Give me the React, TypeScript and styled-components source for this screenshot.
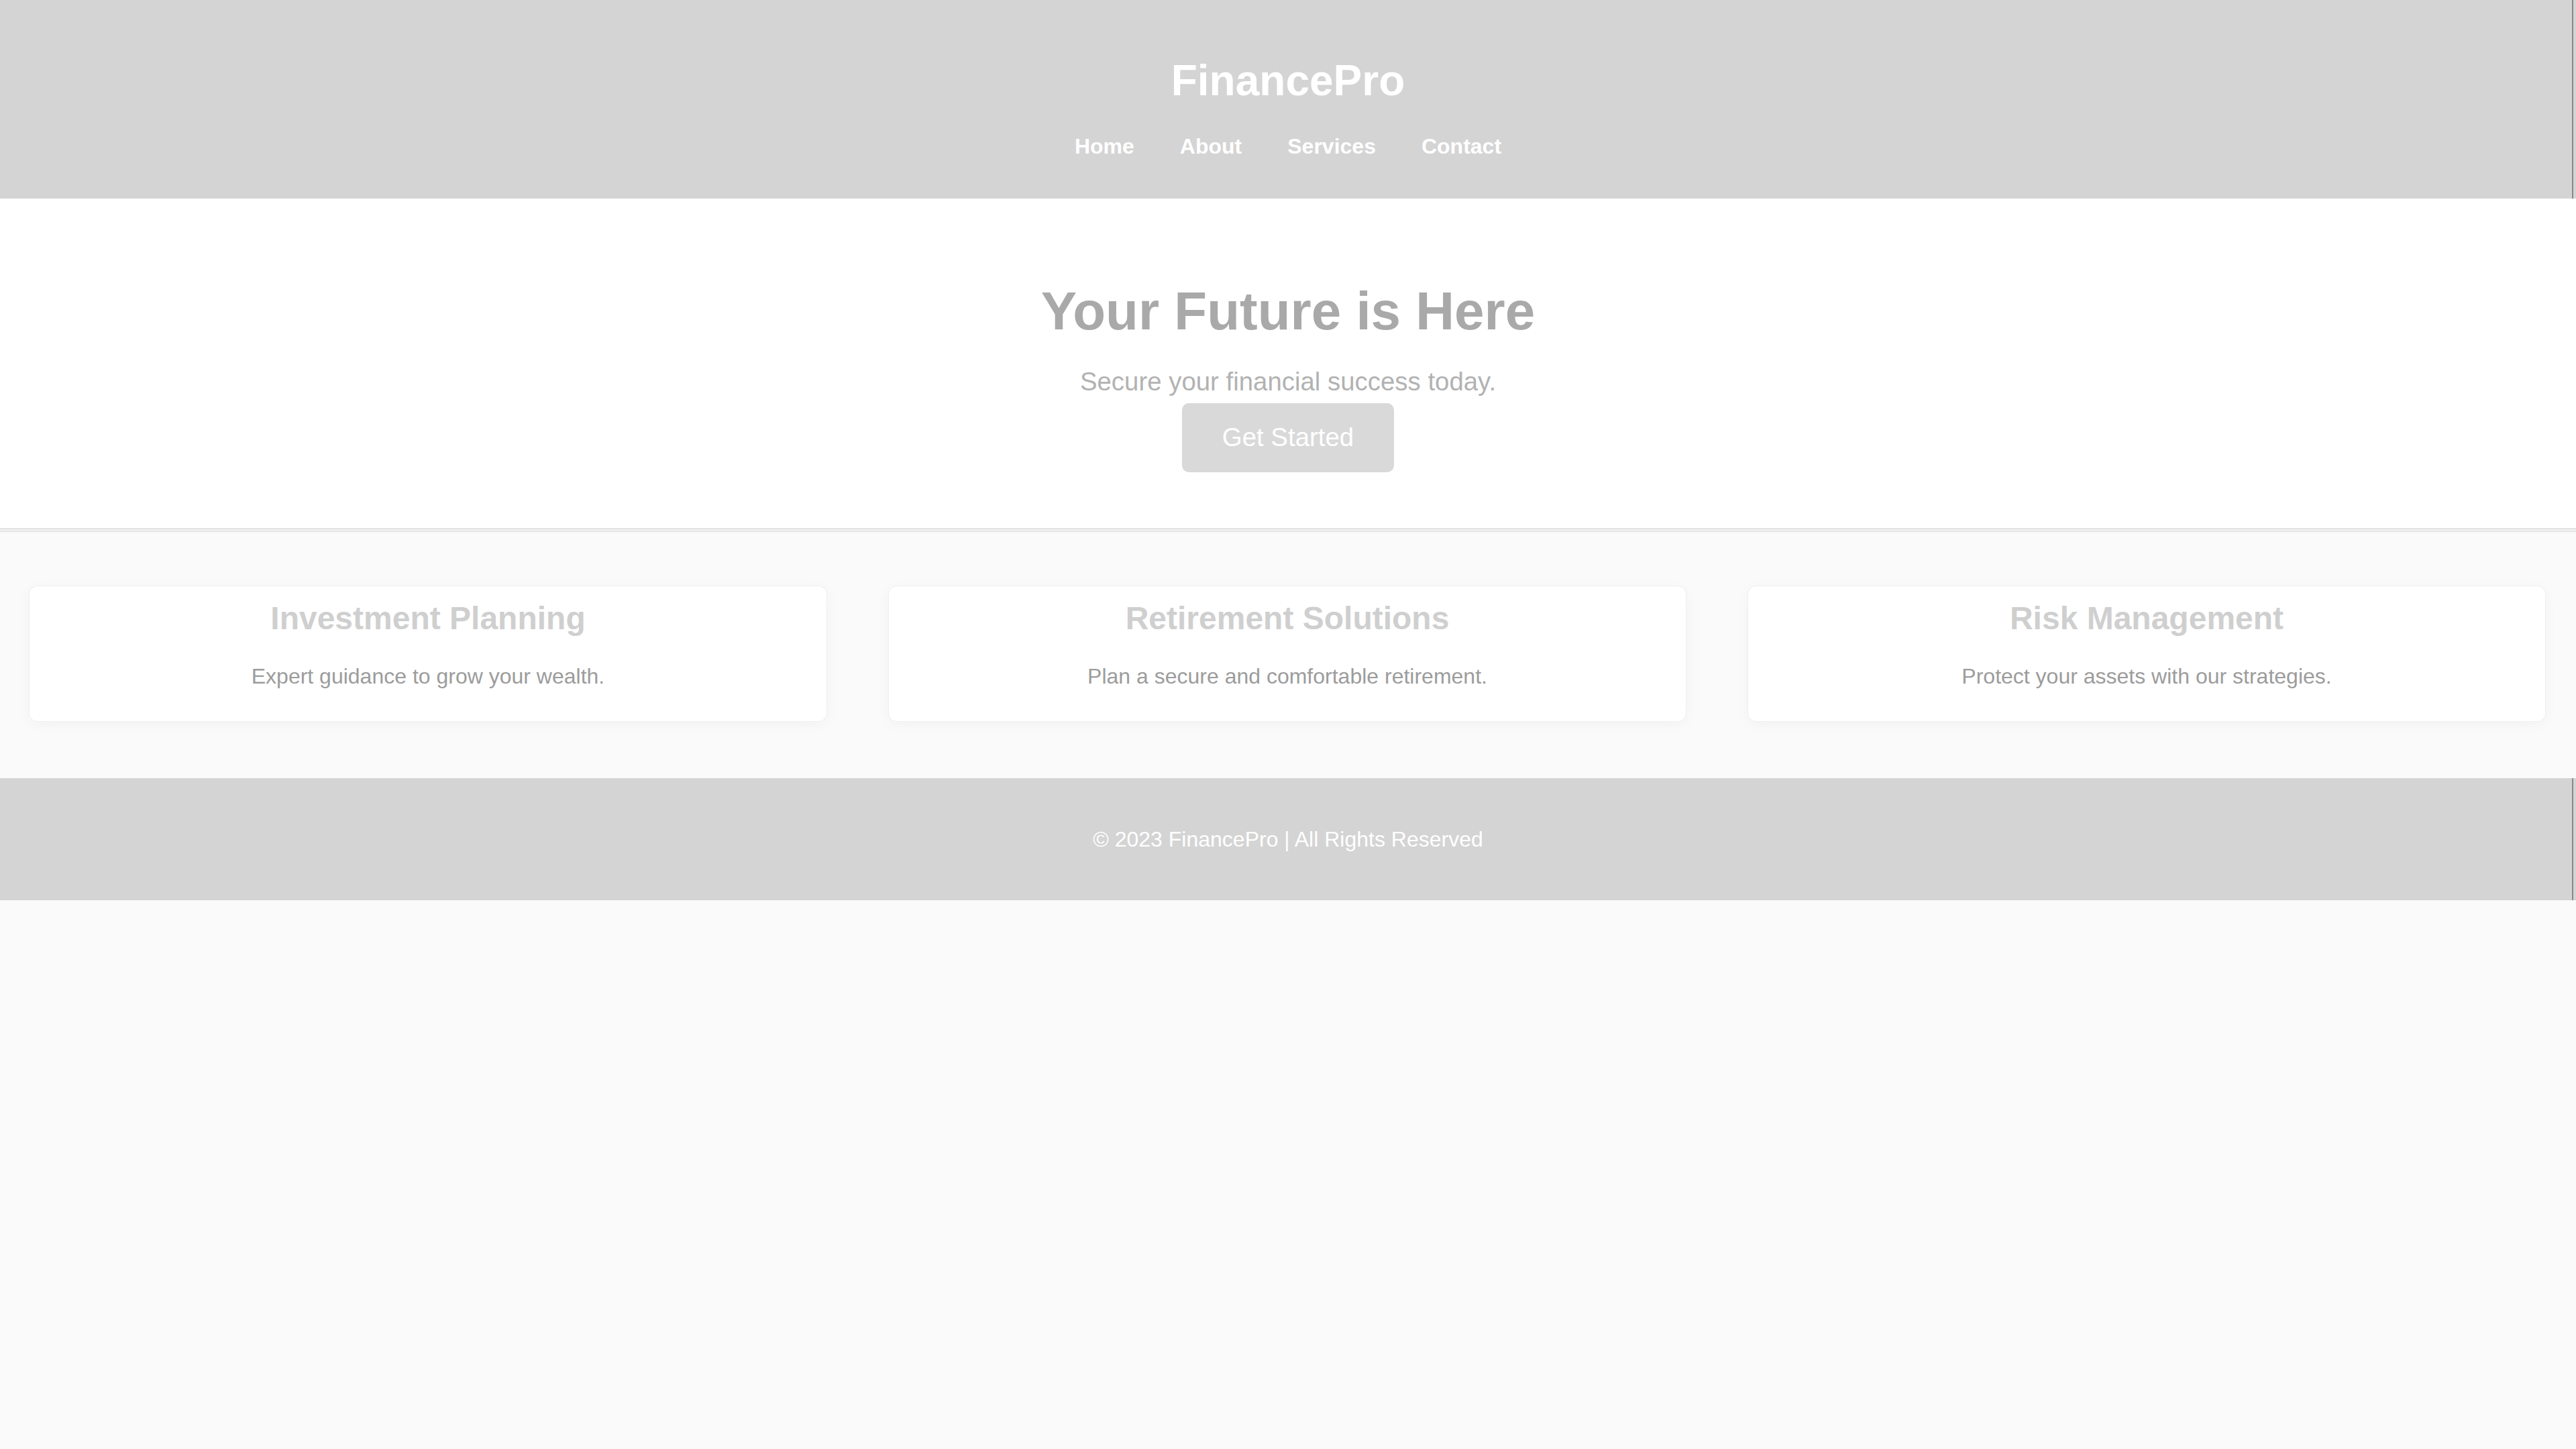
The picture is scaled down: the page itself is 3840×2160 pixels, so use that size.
import React from "react";
import styled, { createGlobalStyle } from "styled-components";

const GlobalStyle = createGlobalStyle`
  html, body {
    margin: 0;
    padding: 0;
    background: #fafafa;
    font-family: "Liberation Sans", Arial, sans-serif;
  }
  #root {
    min-height: 2160px;
    background: #fafafa;
  }
`;

const services = [
  { title: "Investment Planning", text: "Expert guidance to grow your wealth." },
  { title: "Retirement Solutions", text: "Plan a secure and comfortable retirement." },
  { title: "Risk Management", text: "Protect your assets with our strategies." },
];

const App = () => {
  return (
    <>
      <GlobalStyle />
      <Header>
        <Logo>FinancePro</Logo>
        <Nav>
          <NavLink href="#">Home</NavLink>
          <NavLink href="#">About</NavLink>
          <NavLink href="#">Services</NavLink>
          <NavLink href="#">Contact</NavLink>
        </Nav>
      </Header>
      <Hero>
        <HeroTitle>Your Future is Here</HeroTitle>
        <HeroText>Secure your financial success today.</HeroText>
        <CtaButton>Get Started</CtaButton>
      </Hero>
      <Cards>
        {services.map((s) => (
          <Card key={s.title}>
            <CardTitle>{s.title}</CardTitle>
            <CardText>{s.text}</CardText>
          </Card>
        ))}
      </Cards>
      <Footer>
        <FooterText>© 2023 FinancePro | All Rights Reserved</FooterText>
      </Footer>
    </>
  );
};

export default App;

const Header = styled.header`
  height: 296px;
  box-sizing: border-box;
  padding-top: 83px;
  background-color: #d4d4d4;
  color: white;
  text-align: center;
  box-shadow: inset -4px 0 0 #d4d4d4, inset -6px 0 0 #8a8a8a;
`;
const Logo = styled.h1`
  margin: 0;
  font-size: 64px;
  line-height: 74px;
  font-weight: bold;
`;
const Nav = styled.nav`
  margin-top: 43px;
  display: flex;
  justify-content: center;
  gap: 68px;
`;
const NavLink = styled.a`
  color: white;
  text-decoration: none;
  font-weight: bold;
  font-size: 32px;
  line-height: 37px;
`;
const Hero = styled.section`
  height: 492px;
  box-sizing: border-box;
  padding-top: 122px;
  background: white;
  text-align: center;
  box-shadow: 0 1px 0 #bdbdbd, 0 3px 0 #ffffff, 0 4px 0 #cfcfcf,
    0 6px 0 #f3f3f3;
  position: relative;
`;
const HeroTitle = styled.h2`
  margin: 0;
  font-size: 80px;
  line-height: 92px;
  font-weight: bold;
  color: #a9a9a9;
`;
const HeroText = styled.p`
  margin: 37px 0 0;
  font-size: 38.4px;
  line-height: 44px;
  color: #b2b2b2;
`;
const CtaButton = styled.button`
  margin-top: 10px;
  padding: 29px 60px 30px;
  border: none;
  border-radius: 10px;
  background-color: #d9d9d9;
  color: white;
  font-family: inherit;
  font-size: 38.4px;
  line-height: 44px;
  cursor: pointer;
`;
const Cards = styled.section`
  display: grid;
  grid-template-columns: repeat(3, 1fr);
  gap: 93px;
  padding: 86px 46px 85px 44px;
  background: #fafafa;
`;
const Card = styled.div`
  background: white;
  border-radius: 12px;
  padding: 20px 20px 48px;
  text-align: center;
  box-shadow: 0 0 0 1px #f0f0f0, 0 4px 20px rgba(0, 0, 0, 0.04);
`;
const CardTitle = styled.h3`
  margin: 0;
  font-size: 48px;
  line-height: 55px;
  font-weight: bold;
  color: #cfcfcf;
`;
const CardText = styled.p`
  margin: 41px 0 0;
  font-size: 32px;
  line-height: 37px;
  color: #9c9c9c;
`;
const Footer = styled.footer`
  height: 182px;
  display: flex;
  align-items: center;
  justify-content: center;
  background-color: #d4d4d4;
  box-shadow: inset -4px 0 0 #d4d4d4, inset -6px 0 0 #8a8a8a;
`;
const FooterText = styled.p`
  margin: 0;
  color: white;
  font-size: 32px;
  line-height: 37px;
`;
